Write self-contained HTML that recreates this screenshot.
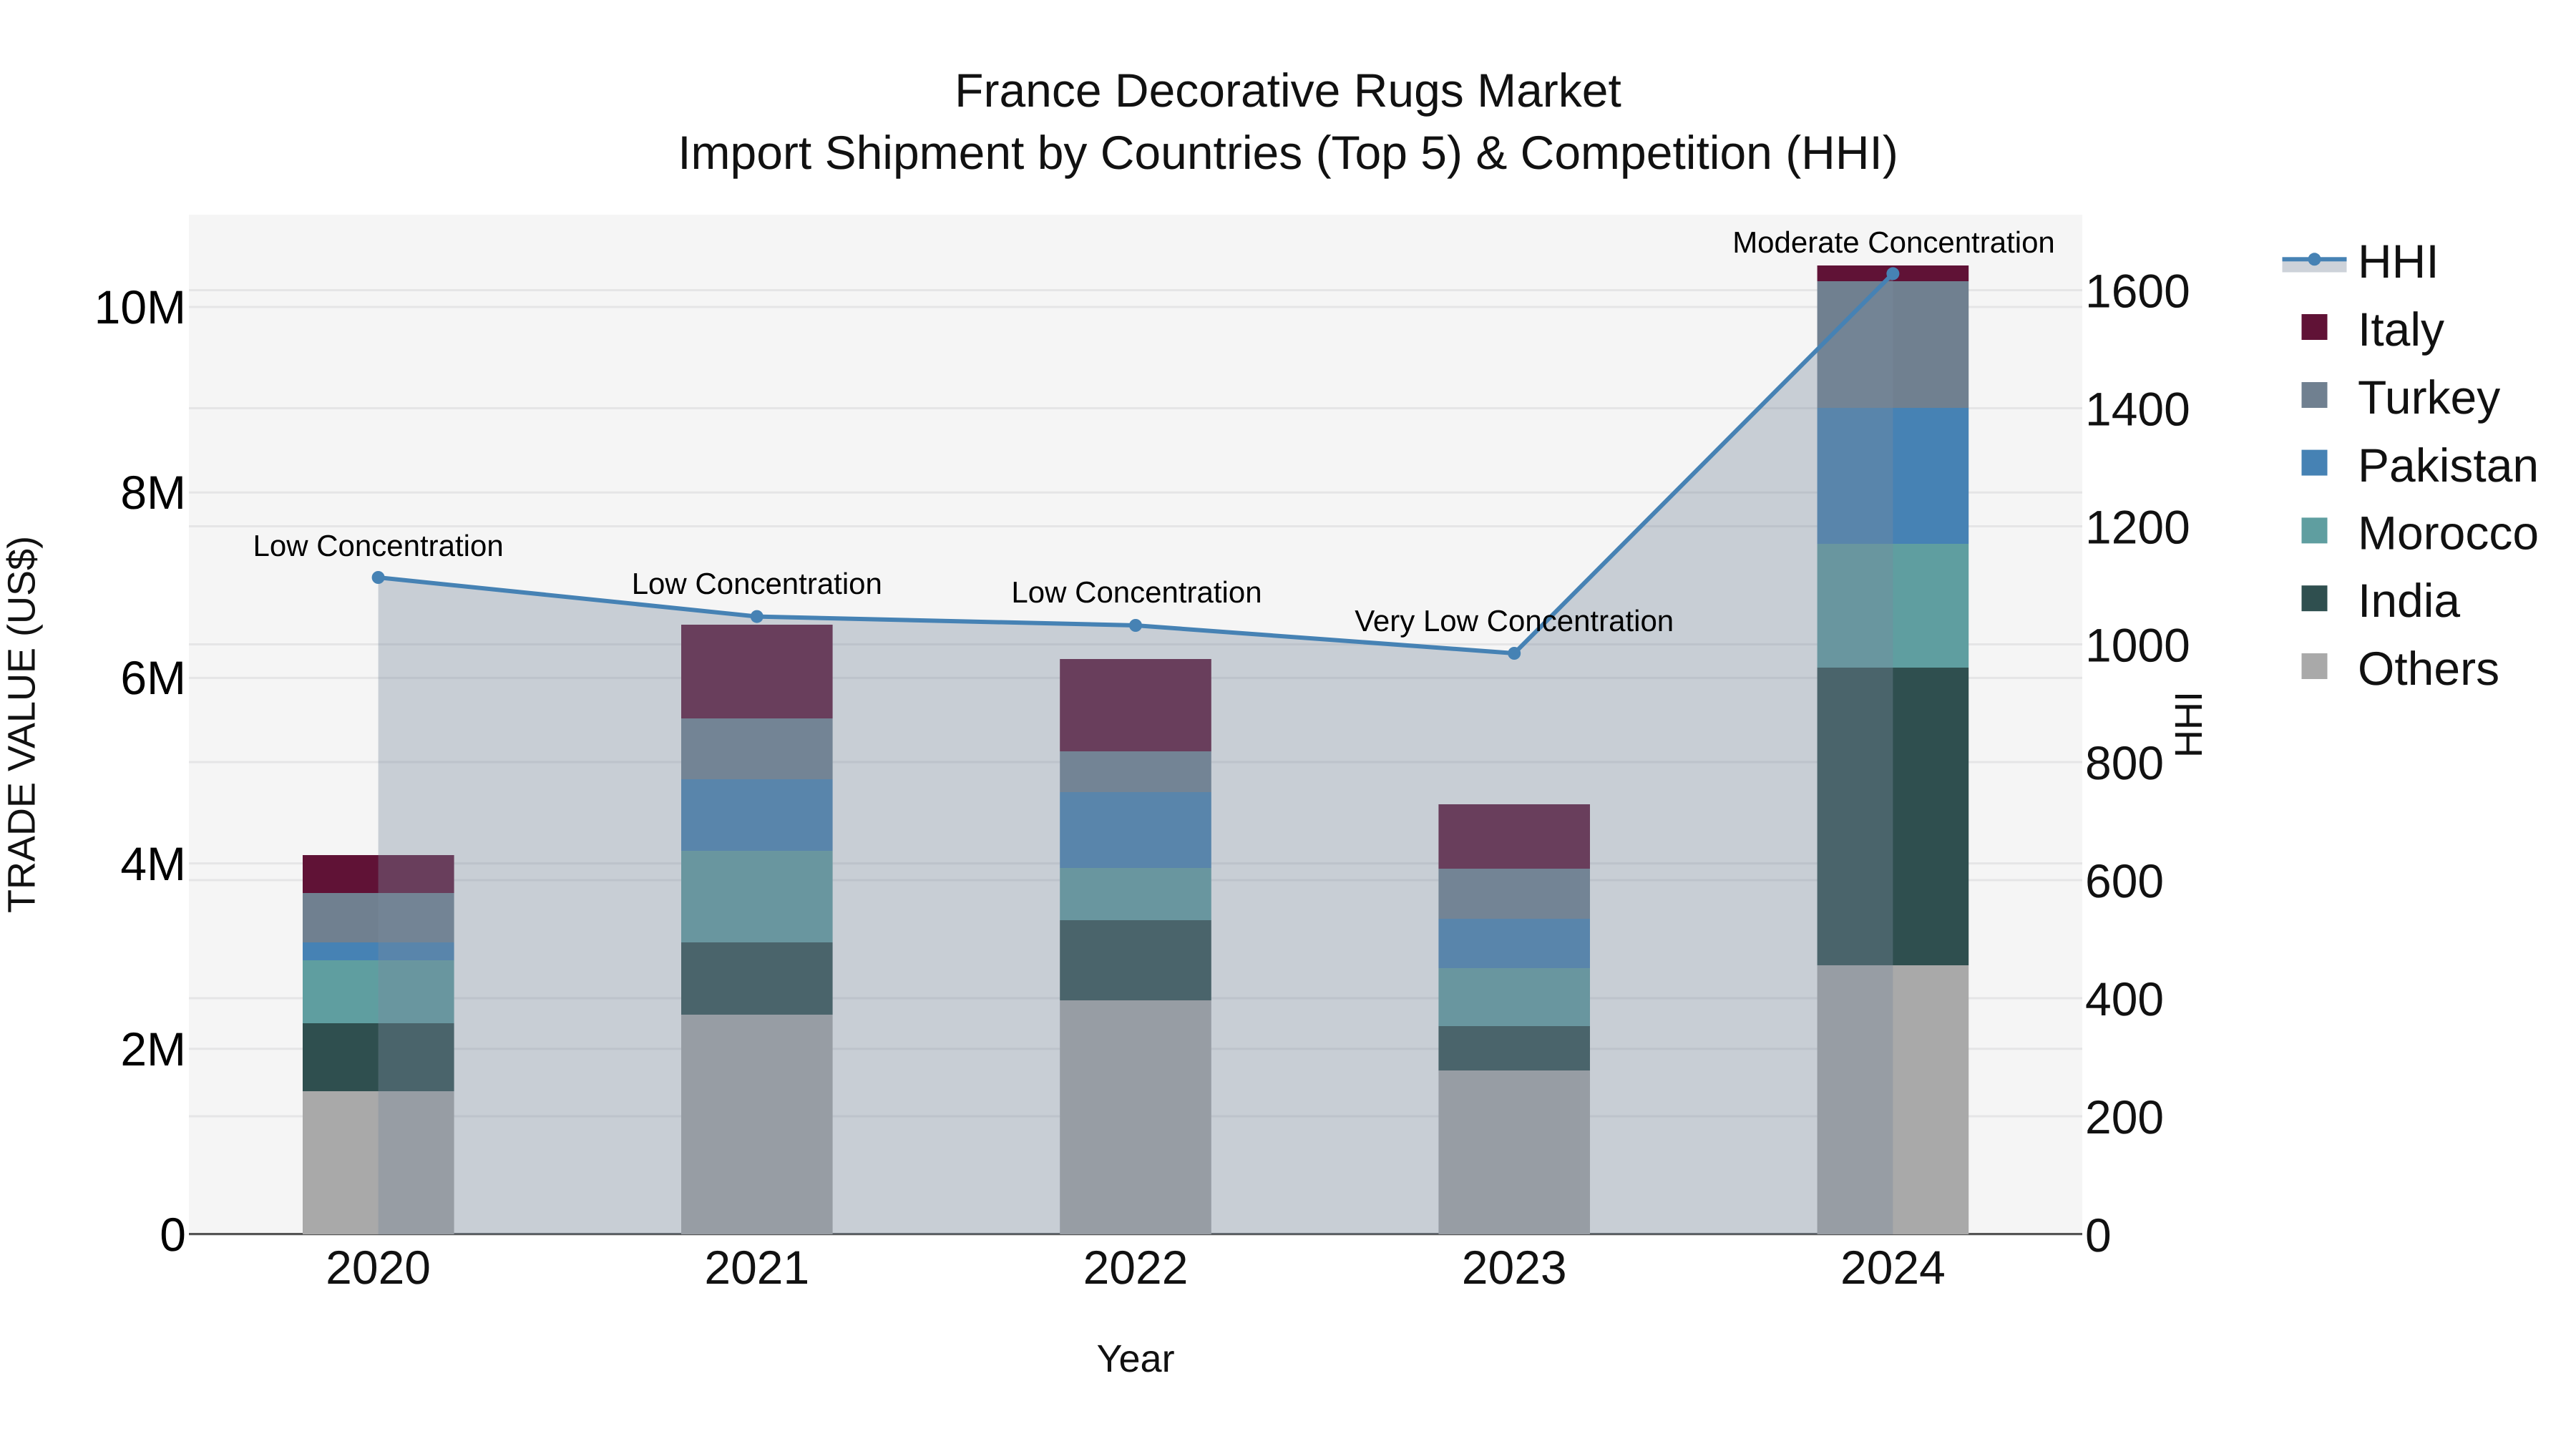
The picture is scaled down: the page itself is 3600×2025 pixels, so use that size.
<!DOCTYPE html>
<html lang="en">
<head>
<meta charset="utf-8">
<title>France Decorative Rugs Market</title>
<style>
html,body{margin:0;padding:0;background:#fff;width:3600px;height:2025px;overflow:hidden}
svg{display:block}
text{font-family:"Liberation Sans",Arial,sans-serif;text-rendering:geometricPrecision}
.t{font-size:66px;fill:#111}
.k{font-size:66px;fill:#000}
.a{font-size:42px;fill:#000;text-anchor:middle}
</style>
</head>
<body>
<svg xmlns="http://www.w3.org/2000/svg" width="3600" height="2025" viewBox="0 0 3600 2025">
<rect width="3600" height="2025" fill="#fff"/>
<rect x="264" y="300" width="2646" height="1425" fill="#f5f5f5"/>

<!-- grid -->
<g stroke="#e5e5e6" stroke-width="3">
<path d="M264 429H2910M264 688.2H2910M264 947.4H2910M264 1206.6H2910M264 1465.8H2910"/>
<path d="M264 405.5H2910M264 570.5H2910M264 735.5H2910M264 900.5H2910M264 1065H2910M264 1230H2910M264 1395H2910M264 1560H2910"/>
</g>
<rect x="264" y="1723" width="2646" height="3.2" fill="#555"/>

<!-- bars 2020 -->
<g>
<rect x="423" y="1195" width="211.6" height="53" fill="#601236"/>
<rect x="423" y="1248" width="211.6" height="69" fill="#708090"/>
<rect x="423" y="1317" width="211.6" height="25" fill="#4682b4"/>
<rect x="423" y="1342" width="211.6" height="88" fill="#5f9ea0"/>
<rect x="423" y="1430" width="211.6" height="95" fill="#2f4f4f"/>
<rect x="423" y="1525" width="211.6" height="200" fill="#a9a9a9"/>
<!-- 2021 -->
<rect x="952" y="873" width="211.6" height="131" fill="#601236"/>
<rect x="952" y="1004" width="211.6" height="85" fill="#708090"/>
<rect x="952" y="1089" width="211.6" height="100" fill="#4682b4"/>
<rect x="952" y="1189" width="211.6" height="128" fill="#5f9ea0"/>
<rect x="952" y="1317" width="211.6" height="101" fill="#2f4f4f"/>
<rect x="952" y="1418" width="211.6" height="307" fill="#a9a9a9"/>
<!-- 2022 -->
<rect x="1481.2" y="921" width="211.6" height="129" fill="#601236"/>
<rect x="1481.2" y="1050" width="211.6" height="57" fill="#708090"/>
<rect x="1481.2" y="1107" width="211.6" height="106" fill="#4682b4"/>
<rect x="1481.2" y="1213" width="211.6" height="73" fill="#5f9ea0"/>
<rect x="1481.2" y="1286" width="211.6" height="112" fill="#2f4f4f"/>
<rect x="1481.2" y="1398" width="211.6" height="327" fill="#a9a9a9"/>
<!-- 2023 -->
<rect x="2010.4" y="1124" width="211.6" height="90" fill="#601236"/>
<rect x="2010.4" y="1214" width="211.6" height="70" fill="#708090"/>
<rect x="2010.4" y="1284" width="211.6" height="69" fill="#4682b4"/>
<rect x="2010.4" y="1353" width="211.6" height="81" fill="#5f9ea0"/>
<rect x="2010.4" y="1434" width="211.6" height="62" fill="#2f4f4f"/>
<rect x="2010.4" y="1496" width="211.6" height="229" fill="#a9a9a9"/>
<!-- 2024 -->
<rect x="2539.6" y="371" width="211.6" height="22" fill="#601236"/>
<rect x="2539.6" y="393" width="211.6" height="177" fill="#708090"/>
<rect x="2539.6" y="570" width="211.6" height="190" fill="#4682b4"/>
<rect x="2539.6" y="760" width="211.6" height="173" fill="#5f9ea0"/>
<rect x="2539.6" y="933" width="211.6" height="416" fill="#2f4f4f"/>
<rect x="2539.6" y="1349" width="211.6" height="376" fill="#a9a9a9"/>
</g>

<!-- HHI area, line, markers -->
<path d="M528.6 1725V807L1057.8 861.6L1587 874L2116.2 913L2645.4 382.4V1725Z" fill="rgb(122,138,158)" fill-opacity=".37"/>
<path d="M528.6 807L1057.8 861.6L1587 874L2116.2 913L2645.4 382.4" fill="none" stroke="#4682b4" stroke-width="6" stroke-linejoin="round"/>
<g fill="#4682b4">
<circle cx="528.6" cy="807" r="9"/>
<circle cx="1057.8" cy="861.6" r="9"/>
<circle cx="1587" cy="874" r="9"/>
<circle cx="2116.2" cy="913" r="9"/>
<circle cx="2645.4" cy="382.4" r="9"/>
</g>

<!-- annotations -->
<text class="a" x="528.6" y="777">Low Concentration</text>
<text class="a" x="1057.8" y="830">Low Concentration</text>
<text class="a" x="1588.5" y="842">Low Concentration</text>
<text class="a" x="2116.2" y="882">Very Low Concentration</text>
<text class="a" x="2646.5" y="353">Moderate Concentration</text>

<!-- title -->
<text x="1800" y="149" font-size="66" fill="#111" text-anchor="middle">France Decorative Rugs Market</text>
<text x="1800" y="236" font-size="66" fill="#111" text-anchor="middle">Import Shipment by Countries (Top 5) &amp; Competition (HHI)</text>

<!-- left ticks -->
<g class="ticks" text-anchor="end">
<text class="k" x="260" y="452">10M</text>
<text class="k" x="260" y="711">8M</text>
<text class="k" x="260" y="970">6M</text>
<text class="k" x="260" y="1230">4M</text>
<text class="k" x="260" y="1489">2M</text>
<text class="k" x="260" y="1748">0</text>
</g>

<!-- right ticks -->
<g>
<text class="t" x="2914" y="429.5">1600</text>
<text class="t" x="2914" y="594.5">1400</text>
<text class="t" x="2914" y="759.5">1200</text>
<text class="t" x="2914" y="924.5">1000</text>
<text class="t" x="2914" y="1089">800</text>
<text class="t" x="2914" y="1254">600</text>
<text class="t" x="2914" y="1419">400</text>
<text class="t" x="2914" y="1584">200</text>
<text class="t" x="2914" y="1749">0</text>
</g>

<!-- x ticks -->
<g text-anchor="middle">
<text class="t" x="528.6" y="1794">2020</text>
<text class="t" x="1057.8" y="1794">2021</text>
<text class="t" x="1587" y="1794">2022</text>
<text class="t" x="2116.2" y="1794">2023</text>
<text class="t" x="2645.4" y="1794">2024</text>
</g>

<!-- axis titles -->
<text x="1587" y="1917" font-size="54" fill="#111" text-anchor="middle">Year</text>
<text transform="translate(48.5 1012.5) rotate(-90)" font-size="54" fill="#111" text-anchor="middle">TRADE VALUE (US$)</text>
<text transform="translate(3077 1012.5) rotate(-90)" font-size="54" fill="#111" text-anchor="middle">HHI</text>

<!-- legend -->
<rect x="3189.5" y="362" width="90" height="18.5" fill="#cdd2d9"/>
<rect x="3189.5" y="359.3" width="90" height="6" fill="#4682b4"/>
<circle cx="3234.5" cy="362.3" r="9" fill="#4682b4"/>
<rect x="3216.5" y="439" width="36" height="36" fill="#601236"/>
<rect x="3216.5" y="534" width="36" height="36" fill="#708090"/>
<rect x="3216.5" y="628.6" width="36" height="36" fill="#4682b4"/>
<rect x="3216.5" y="723.4" width="36" height="36" fill="#5f9ea0"/>
<rect x="3216.5" y="818.2" width="36" height="36" fill="#2f4f4f"/>
<rect x="3216.5" y="913" width="36" height="36" fill="#a9a9a9"/>
<g>
<text class="t" x="3295" y="388">HHI</text>
<text class="t" x="3295" y="483">Italy</text>
<text class="t" x="3295" y="578">Turkey</text>
<text class="t" x="3295" y="673">Pakistan</text>
<text class="t" x="3295" y="767.5">Morocco</text>
<text class="t" x="3295" y="862">India</text>
<text class="t" x="3295" y="957">Others</text>
</g>
</svg>
</body>
</html>
